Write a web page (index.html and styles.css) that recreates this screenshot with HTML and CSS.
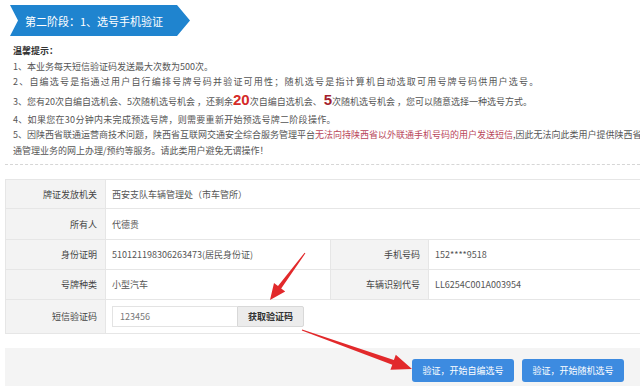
FILE: index.html
```html
<!DOCTYPE html>
<html lang="zh-CN">
<head>
<meta charset="utf-8">
<title>选号手机验证</title>
<link rel="stylesheet" href="styles.css">
</head>
<body>
<div class="page">
  <div class="stage-wrap">
    <div class="stage">第二阶段：1、选号手机验证</div>
  </div>
  <div class="tips">
    <div class="tips-title">温馨提示：</div>
    <p>1、本业务每天短信验证码发送最大次数为500次。</p>
    <p class="wide">2、自编选号是指通过用户自行编排号牌号码并验证可用性；随机选号是指计算机自动选取可用号牌号码供用户选号。</p>
    <p class="tall">3、您有20次自编自选机会、5次随机选号机会 ，还剩余<b class="num red1">20</b>次自编自选机会、 <b class="num red2">5</b>次随机选号机会 ，您可以随意选择一种选号方式。</p>
    <p class="mid">4、如果您在30分钟内未完成预选号牌，则需要重新开始预选号牌二阶段操作。</p>
    <p>5、因陕西省联通运营商技术问题，陕西省互联网交通安全综合服务管理平台<span class="warn">无法向持陕西省以外联通手机号码的用户发送短信</span>,因此无法向此类用户提供陕西省交</p>
    <p>通管理业务的网上办理/预约等服务。请此类用户避免无谓操作！</p>
  </div>
  <div class="divider"></div>
  <table class="form">
    <colgroup>
      <col class="c1"><col class="c2"><col class="c3"><col class="c4">
    </colgroup>
    <tr class="r1">
      <td class="lbl">牌证发放机关</td>
      <td class="val" colspan="3">西安支队车辆管理处（市车管所）</td>
    </tr>
    <tr class="r2">
      <td class="lbl">所有人</td>
      <td class="val" colspan="3">代德贵</td>
    </tr>
    <tr class="r3">
      <td class="lbl">身份证明</td>
      <td class="val">510121198306263473(居民身份证)</td>
      <td class="lbl">手机号码</td>
      <td class="val">152****9518</td>
    </tr>
    <tr class="r4">
      <td class="lbl">号牌种类</td>
      <td class="val">小型汽车</td>
      <td class="lbl">车辆识别代号</td>
      <td class="val">LL6254C001A003954</td>
    </tr>
    <tr class="r5">
      <td class="lbl">短信验证码</td>
      <td class="val" colspan="3">
        <div class="code-row">
          <div class="code-input">123456</div>
          <div class="code-btn">获取验证码</div>
        </div>
      </td>
    </tr>
  </table>
  <div class="actions">
    <div class="btn">验证，开始自编选号</div>
    <div class="btn">验证，开始随机选号</div>
  </div>
  <svg class="arrows" width="640" height="386" viewBox="0 0 640 386">
    <polygon fill="#e2292b" points="305.4,253.3 281.2,288.4 285.2,291.4 270,300 274.0,283.0 278.0,286.0 304.6,252.7"/>
    <polygon fill="#e2292b" points="301.8,330.5 392.3,364.7 390.4,369.8 412,369 395.8,354.8 393.9,359.9 302.2,329.5"/>
  </svg>
</div>
</body>
</html>
```
FILE: styles.css
```css
* { box-sizing: border-box; }
html, body {
  margin: 0;
  padding: 0;
  background: #fff;
  overflow: hidden;
}
body {
  width: 640px;
  height: 386px;
  font-family: "Noto Sans CJK SC", "Liberation Sans", sans-serif;
  font-size: 9px;
  color: #555;
}
.page {
  position: relative;
  width: 640px;
  height: 386px;
  overflow: hidden;
}
.stage-wrap {
  padding: 5px 0 0 10px;
}
.stage {
  width: 180px;
  height: 31px;
  background: #1f84cf;
  clip-path: polygon(0 0, 167px 0, 180px 50%, 167px 100%, 0 100%, 8px 50%);
  color: #fff;
  font-size: 11px;
  display: flex;
  align-items: center;
  padding-left: 15px;
}
.tips {
  margin-top: 7px;
  padding-left: 13px;
  white-space: nowrap;
  line-height: 15.5px;
}
.tips-title {
  font-weight: bold;
  color: #333;
}
.tips p {
  margin: 0;
}
.tips p.wide {
  letter-spacing: 1.2px;
}
.tips p.mid {
  letter-spacing: 0.3px;
}
.tips p.tall {
  line-height: 20px;
}
.num {
  font-size: 15px;
  font-weight: bold;
  font-family: "Liberation Sans", sans-serif;
}
.red1 { color: #d42a28; }
.red2 { color: #a41f2e; }
.warn { color: #b9465a; }
.divider {
  margin: 6px 0 0 5px;
  border-top: 1px dashed #d6d6d6;
}
.form {
  margin: 14px 0 0 5px;
  width: 640px;
  border-collapse: collapse;
  table-layout: fixed;
}
.c1 { width: 100px; }
.c2 { width: 225px; }
.c3 { width: 98px; }
.form td {
  border: 1px solid #e6e6e6;
  padding: 0;
  white-space: nowrap;
}
.form .lbl {
  background: #f3f3f3;
  text-align: right;
  padding-right: 8px;
  color: #444;
}
.form .val {
  padding-left: 6px;
  color: #555;
}
.r1 td { height: 29px; }
.r2 td { height: 31px; }
.r3 td { height: 30px; }
.r4 td { height: 30px; }
.r5 td { height: 34px; }
.code-row {
  display: flex;
  align-items: stretch;
  height: 21px;
}
.code-input {
  width: 125px;
  border: 1px solid #e3e3e3;
  border-right: none;
  display: flex;
  align-items: center;
  padding-left: 7px;
  color: #777;
}
.code-btn {
  width: 67px;
  background: #ececec;
  border: 1px solid #d8d8d8;
  border-radius: 0 2px 2px 0;
  display: flex;
  align-items: center;
  justify-content: center;
  font-weight: bold;
  color: #333;
}
.actions {
  margin: 14px 0 0 5px;
  height: 40px;
  background: #f4f4f4;
  display: flex;
  justify-content: flex-end;
  align-items: flex-start;
  gap: 8px;
  padding: 11px 16px 0 0;
}
.btn {
  width: 102px;
  height: 23px;
  background: #3d8be0;
  border-radius: 3px;
  color: #fff;
  display: flex;
  align-items: center;
  justify-content: center;
}
.arrows {
  position: absolute;
  left: 0;
  top: 0;
  pointer-events: none;
}
```
